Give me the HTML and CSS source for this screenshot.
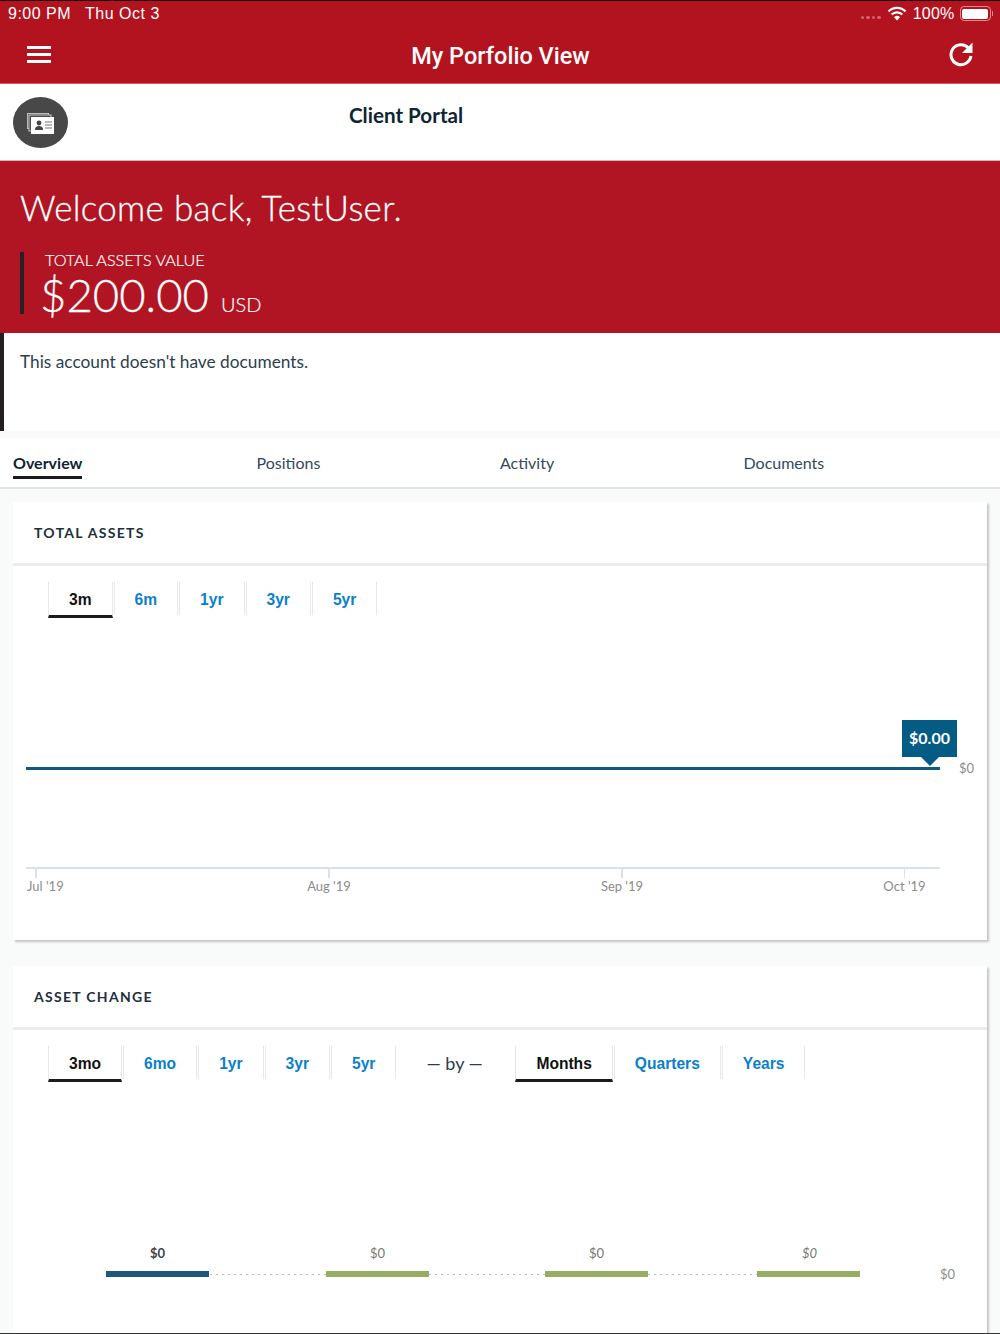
FILE: index.html
```html
<!DOCTYPE html>
<html lang="en">
<head>
<meta charset="utf-8">
<title>My Porfolio View</title>
<link rel="stylesheet" href="styles.css">
</head>
<body>
<div class="page">
  <header class="appbar">
    <div class="status">
      <div class="status-left"><span>9:00 PM</span><span>Thu Oct 3</span></div>
      <div class="status-right">
        <span class="signal"><i></i><i></i><i></i><i></i></span>
        <svg class="wifi" width="20" height="15" viewBox="0 0 20 15"><path d="M1.500 5.500a12 12 0 0 1 17 0" fill="none" stroke="#fff" stroke-width="2.200"/><path d="M4.600 8.600a7.600 7.600 0 0 1 10.800 0" fill="none" stroke="#fff" stroke-width="2.200"/><path d="M7 11.200a4 4 0 0 1 6 0L10 14.500z" fill="#fff"/></svg>
        <span class="pct">100%</span>
        <span class="battery"><span class="battery-fill"></span></span><span class="battery-tip"></span>
      </div>
    </div>
    <div class="nav">
      <svg class="menu" width="24" height="17" viewBox="0 0 24 17"><path d="M0 1.500h24M0 8.500h24M0 15.500h24" stroke="#fff" stroke-width="3"/></svg>
      <h1 class="nav-title">My Porfolio View</h1>
      <svg class="refresh" width="26" height="26" viewBox="0 0 26 26"><path d="M20.600 7.200A10 10 0 1 0 22.900 15" fill="none" stroke="#fff" stroke-width="3"/><path d="M24.500 1.500v10.500H14z" fill="#fff"/></svg>
    </div>
  </header>

  <section class="portal">
    <span class="avatar">
      <svg width="28" height="22" viewBox="0 0 28 22"><rect x="0.500" y="0.500" width="21" height="15" fill="#4a4a4a" stroke="#bbb"/><rect x="2" y="2" width="22" height="16" fill="#4a4a4a" stroke="#ccc"/><rect x="4" y="4" width="23" height="17" fill="#fff"/><circle cx="12" cy="10" r="2.400" fill="#444"/><path d="M8 17c0-3 1.500-4 4-4s4 1 4 4z" fill="#444"/><path d="M18 9h7M18 12h7M18 15h7" stroke="#777" stroke-width="1.200"/></svg>
    </span>
    <h2 class="portal-title">Client Portal</h2>
  </section>

  <section class="hero">
    <h2 class="welcome">Welcome back, TestUser.</h2>
    <div class="total">
      <div class="total-label">TOTAL ASSETS VALUE</div>
      <div class="total-value"><span class="amount">$200.00</span><span class="currency">USD</span></div>
    </div>
  </section>

  <section class="docs"><p>This account doesn't have documents.</p></section>

  <main class="content">
    <nav class="tabs">
      <a class="tab tab-active">Overview</a>
      <a class="tab">Positions</a>
      <a class="tab">Activity</a>
      <a class="tab">Documents</a>
    </nav>

    <article class="card card-assets">
      <h3 class="card-title">TOTAL ASSETS</h3>
      <div class="ranges">
        <a class="range range-active">3m</a><a class="range">6m</a><a class="range">1yr</a><a class="range">3yr</a><a class="range">5yr</a>
      </div>
      <div class="linechart">
        <div class="line"></div>
        <div class="tooltip">$0.00</div>
        <span class="y-label">$0</span>
        <div class="axis"></div>
        <div class="tick tick-jul"><span>Jul '19</span></div>
        <div class="tick tick-aug"><span>Aug '19</span></div>
        <div class="tick tick-sep"><span>Sep '19</span></div>
        <div class="tick tick-oct"><span>Oct '19</span></div>
      </div>
    </article>

    <article class="card card-change">
      <h3 class="card-title">ASSET CHANGE</h3>
      <div class="ranges">
        <a class="range range-active">3mo</a><a class="range">6mo</a><a class="range">1yr</a><a class="range">3yr</a><a class="range">5yr</a>
        <span class="by">— by —</span>
        <a class="range range-active">Months</a><a class="range">Quarters</a><a class="range">Years</a>
      </div>
      <div class="barchart">
        <div class="bar-col bar-col-1"><span class="bar-label bar-label-bold">$0</span><span class="bar bar-blue"></span></div>
        <span class="dots dots-1"></span>
        <div class="bar-col bar-col-2"><span class="bar-label">$0</span><span class="bar bar-green"></span></div>
        <span class="dots dots-2"></span>
        <div class="bar-col bar-col-3"><span class="bar-label">$0</span><span class="bar bar-green"></span></div>
        <span class="dots dots-3"></span>
        <div class="bar-col bar-col-4"><span class="bar-label bar-label-italic">$0</span><span class="bar bar-green"></span></div>
        <span class="bar-end">$0</span>
      </div>
    </article>
  </main>
</div>
</body>
</html>
```
FILE: styles.css
```css
* { box-sizing: border-box; }
html, body { margin: 0; padding: 0; }
body { font-family: "Lato", "Noto Sans", sans-serif; background: #f9fafa; color: #1e2f3d; }
h1, h2, h3, p { margin: 0; font-weight: normal; }
.page { width: 1000px; height: 1334px; display: flex; flex-direction: column; overflow: hidden; border-bottom: 1px solid #333; }

.appbar { flex: none; height: 84px; background: #b2131f; border-top: 1px solid #1a0a0c; border-bottom: 1px solid #cf5a62; color: #fff; }
.status { height: 25px; padding: 0 7px 0 8px; display: flex; justify-content: space-between; align-items: center; font-family: "Liberation Sans", sans-serif; font-size: 16px; letter-spacing: 0.500px; }
.status-left { display: flex; gap: 14px; }
.status-right { display: flex; align-items: center; }
.signal { display: flex; gap: 2px; margin-right: 6px; margin-top: 8px; }
.signal i { width: 3.500px; height: 3.500px; border-radius: 50%; background: rgba(255,255,255,.35); }
.wifi { margin-right: 6px; }
.pct { margin-right: 5px; letter-spacing: 0.200px; }
.battery { width: 31px; height: 15px; border: 1px solid rgba(255,255,255,.5); border-radius: 4px; padding: 1.500px; display: flex; }
.battery-fill { flex: 1; background: #fff; border-radius: 2px; }
.battery-tip { width: 1.500px; height: 5px; background: rgba(255,255,255,.5); margin-left: 1px; }
.nav { height: 57px; padding: 0 26px 0 27px; display: flex; align-items: center; justify-content: space-between; }
.menu { margin-top: -1px; }
.nav-title { font-family: "Roboto", sans-serif; font-weight: 500; font-size: 23.500px; margin: 3px 0 0 2px; }
.refresh { margin-top: -2px; }

.portal { flex: none; height: 77px; background: #fff; border-bottom: 1px solid #d9b3b6; display: flex; align-items: flex-start; padding: 13px 0 0 13px; }
.avatar { width: 55px; height: 51px; border-radius: 50%; background: #484848; display: flex; align-items: center; justify-content: center; }
.avatar svg { margin-top: 2px; }
.portal-title { margin: 6px 0 0 281px; font-size: 20.600px; font-weight: 700; color: #0f2433; }

.hero { flex: none; height: 172px; background: #b11523; color: #fff; padding: 23px 20px 0; }
.welcome { font-size: 35px; line-height: 46px; font-weight: 300; letter-spacing: 0.320px; -webkit-text-stroke: 0.300px #fff; }
.total { margin-top: 22px; height: 62px; border-left: 4px solid #262022; padding-left: 16px; }
.total-label { padding-left: 5px; font-size: 16.200px; line-height: 16px; font-weight: 300; -webkit-text-stroke: 0.200px #fff; }
.total-value { display: flex; align-items: baseline; margin-top: 4px; }
.amount { font-size: 45.500px; line-height: 46px; font-weight: 300; -webkit-text-stroke: 0.300px #fff; }
.currency { font-size: 20px; margin-left: 12px; font-weight: 300; -webkit-text-stroke: 0.200px #fff; }

.docs { flex: none; height: 98px; background: #fff; border-left: 4px solid #231f20; padding: 18px 0 0 16px; }
.docs p { font-size: 17.300px; line-height: 22px; color: #2c3e4e; }

.content { flex: 1; overflow: hidden; padding-top: 7px; }
.tabs { height: 51px; background: #fff; border-bottom: 2px solid #e3e3e3; padding: 0 13px; display: grid; grid-template-columns: repeat(4, 1fr); }
.tab { justify-self: start; height: 41px; padding-top: 14px; font-size: 16px; line-height: 22px; color: #34495a; }
.tab-active { font-weight: 700; color: #0f2433; border-bottom: 3px solid #1c1a1f; }

.card { margin: 0 13px; background: #fff; box-shadow: 2px 2px 2px rgba(100,100,100,.35); }
.card-assets { margin-top: 13px; height: 438px; }
.card-change { margin-top: 26px; height: 420px; }
.card-title { height: 64px; border-bottom: 3px solid #ececec; padding: 21px 0 0 21px; font-size: 14px; line-height: 20px; font-weight: 700; letter-spacing: 1.300px; color: #1e2f3d; }

.ranges { display: flex; gap: 1px; margin: 16px 0 0 35px; height: 35px; align-items: flex-start; }
.range { height: 33px; padding: 1px 20px 0; border-left: 1px solid #e8e8e8; border-right: 1px solid #e8e8e8; font-family: "Liberation Sans", sans-serif; font-weight: 700; font-size: 15.600px; line-height: 34px; color: #0b7fcc; }
.range-active { height: 36px; color: #111; border-bottom: 3px solid #1c1a1f; }
.by { padding: 0 31.500px 0 29px; font-size: 18px; line-height: 34px; color: #2c3e4e; }

.linechart { position: relative; height: 323px; font-size: 13px; color: #8c8c8c; }
.line { position: absolute; left: 13px; top: 150px; width: 914px; height: 3px; background: #0d5a80; }
.tooltip { position: absolute; left: 889px; top: 103px; width: 55px; height: 37px; background: #045b84; color: #fff; font-size: 16px; font-weight: 700; line-height: 36px; text-align: center; }
.tooltip::after { content: ""; position: absolute; left: 19px; top: 37px; border: 9px solid transparent; border-top-color: #045b84; border-bottom: 0; }
.y-label { position: absolute; left: 946px; top: 143px; line-height: 16px; }
.axis { position: absolute; left: 13px; top: 250px; width: 914px; height: 2px; background: #d9e0ef; }
.tick { position: absolute; top: 252px; width: 1.500px; height: 10px; background: #d9e0ef; }
.tick span { position: absolute; top: 9px; left: 1px; transform: translateX(-50%); white-space: nowrap; line-height: 16px; background: #fff; }
.tick-jul { left: 22px; }
.tick-jul span { transform: none; left: -8px; }
.tick-aug { left: 315px; }
.tick-sep { left: 608px; }
.tick-oct { left: 890.500px; }

.barchart { position: relative; height: 240px; font-size: 13px; color: #777; }
.bar-col { position: absolute; top: 164px; width: 103px; display: flex; flex-direction: column; align-items: center; }
.bar-col-1 { left: 93px; }
.bar-col-2 { left: 313px; }
.bar-col-3 { left: 532px; }
.bar-col-4 { left: 744px; }
.bar-label { line-height: 16px; }
.bar-label-bold { font-weight: 700; color: #444; }
.bar-label-italic { font-style: italic; padding-left: 2px; }
.bar { width: 103px; height: 6px; margin-top: 10px; }
.bar-blue { background: #1f567c; }
.bar-green { background: #97ad63; }
.dots { position: absolute; top: 192.500px; height: 1.500px; background: repeating-linear-gradient(90deg, #bbb 0 2px, transparent 2px 6px); }
.dots-1 { left: 197px; width: 116px; }
.dots-2 { left: 416px; width: 116px; }
.dots-3 { left: 635px; width: 109px; }
.bar-end { position: absolute; left: 927px; top: 185px; line-height: 16px; color: #8c8c8c; }
```
